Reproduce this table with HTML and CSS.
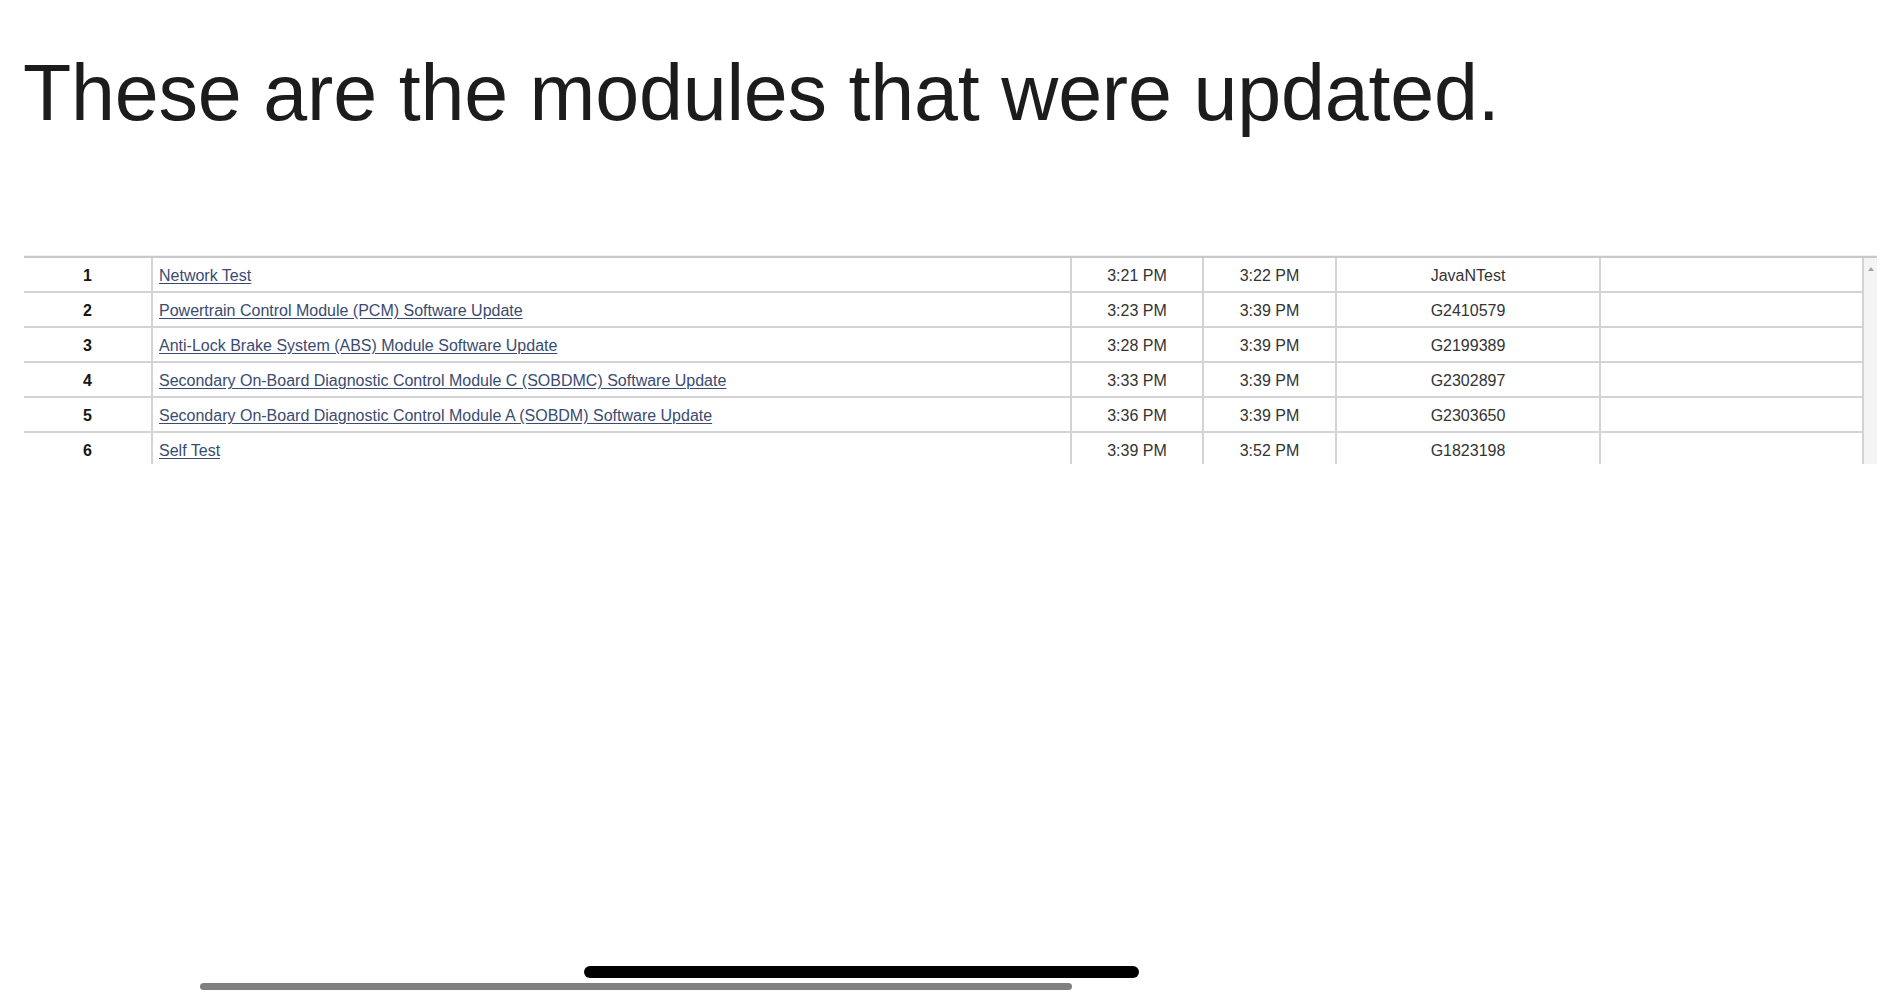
FILE: index.html
```html
<!DOCTYPE html>
<html lang="en">
<head>
<meta charset="utf-8">
<title>Modules updated</title>
<link rel="stylesheet" href="styles.css">
</head>
<body>
<main class="page">
  <h1 class="title">These are the modules that were updated.</h1>
  <section class="frame">
    <div class="grid">
      <div class="row">
        <div class="cell num">1</div>
        <div class="cell name"><a href="#">Network Test</a></div>
        <div class="cell time">3:21 PM</div>
        <div class="cell time">3:22 PM</div>
        <div class="cell code">JavaNTest</div>
        <div class="cell blank"></div>
      </div>
      <div class="row">
        <div class="cell num">2</div>
        <div class="cell name"><a href="#">Powertrain Control Module (PCM) Software Update</a></div>
        <div class="cell time">3:23 PM</div>
        <div class="cell time">3:39 PM</div>
        <div class="cell code">G2410579</div>
        <div class="cell blank"></div>
      </div>
      <div class="row">
        <div class="cell num">3</div>
        <div class="cell name"><a href="#">Anti-Lock Brake System (ABS) Module Software Update</a></div>
        <div class="cell time">3:28 PM</div>
        <div class="cell time">3:39 PM</div>
        <div class="cell code">G2199389</div>
        <div class="cell blank"></div>
      </div>
      <div class="row">
        <div class="cell num">4</div>
        <div class="cell name"><a href="#">Secondary On-Board Diagnostic Control Module C (SOBDMC) Software Update</a></div>
        <div class="cell time">3:33 PM</div>
        <div class="cell time">3:39 PM</div>
        <div class="cell code">G2302897</div>
        <div class="cell blank"></div>
      </div>
      <div class="row">
        <div class="cell num">5</div>
        <div class="cell name"><a href="#">Secondary On-Board Diagnostic Control Module A (SOBDM) Software Update</a></div>
        <div class="cell time">3:36 PM</div>
        <div class="cell time">3:39 PM</div>
        <div class="cell code">G2303650</div>
        <div class="cell blank"></div>
      </div>
      <div class="row">
        <div class="cell num">6</div>
        <div class="cell name"><a href="#">Self Test</a></div>
        <div class="cell time">3:39 PM</div>
        <div class="cell time">3:52 PM</div>
        <div class="cell code">G1823198</div>
        <div class="cell blank"></div>
      </div>
    </div>
    <div class="vscroll"><span class="arrow"></span></div>
  </section>
  <div class="hscroll"></div>
  <div class="home"></div>
</main>
</body>
</html>
```

FILE: styles.css
```css
html, body {
  margin: 0;
  padding: 0;
  background: #ffffff;
}

.page {
  position: relative;
  width: 1900px;
  height: 997px;
  overflow: hidden;
  font-family: "Liberation Sans", Arial, sans-serif;
}

.title {
  margin: 48px 0 0 0;
  padding-left: 23px;
  font-size: 79px;
  line-height: 90px;
  font-weight: 400;
  color: #1c1c1c;
  letter-spacing: -0.2px;
}

.frame {
  margin: 117px 0 0 24px;
  width: 1853px;
  height: 208px;
  overflow: hidden;
  display: flex;
  border-top: 1px solid #efefef;
}

.grid {
  width: 1840px;
  border-top: 2px solid #c9c9c9;
  display: flex;
  flex-direction: column;
}

.row {
  display: grid;
  grid-template-columns: 129px 919px 132px 133px 264px 263px;
  height: 35px;
  flex: none;
  border-bottom: 2px solid #d3d3d3;
  box-sizing: border-box;
}

.cell {
  border-right: 2px solid #d3d3d3;
  font-size: 16px;
  line-height: 36px;
  color: #333333;
  white-space: nowrap;
  overflow: hidden;
}

.num {
  text-align: center;
  font-weight: 700;
  color: #151515;
}

.name {
  padding-left: 6px;
}

.name a {
  color: #3a4b70;
  text-decoration: underline;
  text-underline-offset: 2px;
}

.time,
.code {
  text-align: center;
}

.vscroll {
  width: 13px;
  border-top: 2px solid #c9c9c9;
  background: #f4f4f4;
  position: relative;
}

.arrow {
  position: absolute;
  left: 4px;
  top: 9px;
  width: 0;
  height: 0;
  border-left: 3px solid transparent;
  border-right: 3px solid transparent;
  border-bottom: 4px solid #a3a3a3;
}

.hscroll {
  position: absolute;
  left: 200px;
  top: 983px;
  width: 872px;
  height: 7px;
  border-radius: 4px;
  background: #808080;
}

.home {
  position: absolute;
  left: 584px;
  top: 966px;
  width: 555px;
  height: 12px;
  border-radius: 6px;
  background: #000000;
}
```
